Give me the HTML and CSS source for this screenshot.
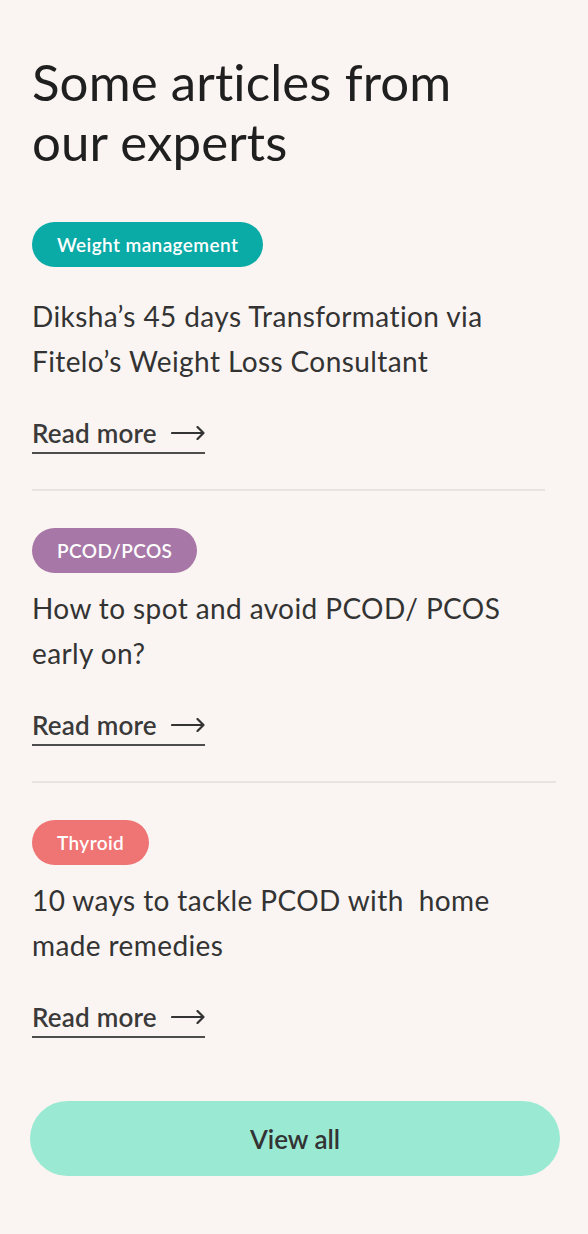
FILE: index.html
```html
<!DOCTYPE html>
<html lang="en">
<head>
<meta charset="utf-8">
<title>Articles</title>
<link rel="stylesheet" href="styles.css">
</head>
<body>
<main class="page">
  <h1 class="heading">Some articles from our experts</h1>

  <article class="article article-first">
    <span class="tag tag-teal">Weight management</span>
    <h2 class="title">Diksha’s 45 days Transformation via Fitelo’s Weight Loss Consultant</h2>
    <a class="read" href="#">Read more
      <svg class="arrow" viewBox="0 0 34 14" width="34" height="14"><path d="M1 7H32.5M26.5 1L32.5 7L26.5 13" fill="none" stroke="#333" stroke-width="2.2" stroke-linecap="round" stroke-linejoin="round"/></svg>
    </a>
  </article>
  <hr class="divider">

  <article class="article">
    <span class="tag tag-purple">PCOD/PCOS</span>
    <h2 class="title">How to spot and avoid PCOD/ PCOS early on?</h2>
    <a class="read" href="#">Read more
      <svg class="arrow" viewBox="0 0 34 14" width="34" height="14"><path d="M1 7H32.5M26.5 1L32.5 7L26.5 13" fill="none" stroke="#333" stroke-width="2.2" stroke-linecap="round" stroke-linejoin="round"/></svg>
    </a>
  </article>
  <hr class="divider divider-long">

  <article class="article">
    <span class="tag tag-red">Thyroid</span>
    <h2 class="title">10 ways to tackle PCOD with&nbsp; home made remedies</h2>
    <a class="read" href="#">Read more
      <svg class="arrow" viewBox="0 0 34 14" width="34" height="14"><path d="M1 7H32.5M26.5 1L32.5 7L26.5 13" fill="none" stroke="#333" stroke-width="2.2" stroke-linecap="round" stroke-linejoin="round"/></svg>
    </a>
  </article>

  <a class="view-all" href="#">View all</a>
</main>
</body>
</html>
```
FILE: styles.css
```css
* { box-sizing: border-box; }
html, body {
  margin: 0;
  padding: 0;
  background: #faf5f2;
}
body {
  font-family: "Lato", "Inter", sans-serif;
  color: #2f2f2f;
}
.page {
  padding: 52px 28px 57px 32px;
  display: flex;
  flex-direction: column;
}
.heading {
  margin: 0;
  font-size: 51px;
  font-weight: 400;
  line-height: 60px;
  color: #1f1f1f;
  max-width: 470px;
  letter-spacing: 0.1px;
}
.article {
  display: flex;
  flex-direction: column;
  align-items: flex-start;
}
.article-first { margin-top: 50px; }
.tag {
  display: inline-flex;
  align-items: center;
  height: 45px;
  padding: 0 25px;
  border-radius: 23px;
  color: #fff;
  font-size: 19px;
  font-weight: 600;
  letter-spacing: 0.4px;
}
.tag-teal { background: #0aaaa7; }
.tag-purple { background: #a778a7; }
.tag-red { background: #ef7474; }
.title {
  margin: 13px 0 0 0;
  font-size: 28px;
  font-weight: 400;
  line-height: 45px;
  letter-spacing: 0.4px;
  color: #333;
  max-width: 510px;
}
.article-first .title { margin-top: 27px; }
.read {
  margin-top: 34px;
  display: inline-flex;
  align-items: center;
  gap: 14px;
  padding: 0 0 4px 0;
  border-bottom: 2px solid #4d4d4d;
  color: #3a3a3a;
  font-size: 26px;
  font-weight: 600;
  letter-spacing: 0.2px;
  text-decoration: none;
  line-height: 30px;
}
.arrow { display: block; margin-top: -1px; }
.divider {
  margin: 35px 15px 37px 0;
  border: 0;
  height: 2px;
  background: #e8e3e0;
}
.divider-long { margin-right: 4px; }
.view-all {
  margin-top: 63px;
  margin-left: -2px;
  width: 530px;
  height: 75px;
  border-radius: 38px;
  background: #9aead3;
  color: #333;
  font-size: 26px;
  font-weight: 600;
  text-decoration: none;
  display: flex;
  align-items: center;
  justify-content: center;
}
```
